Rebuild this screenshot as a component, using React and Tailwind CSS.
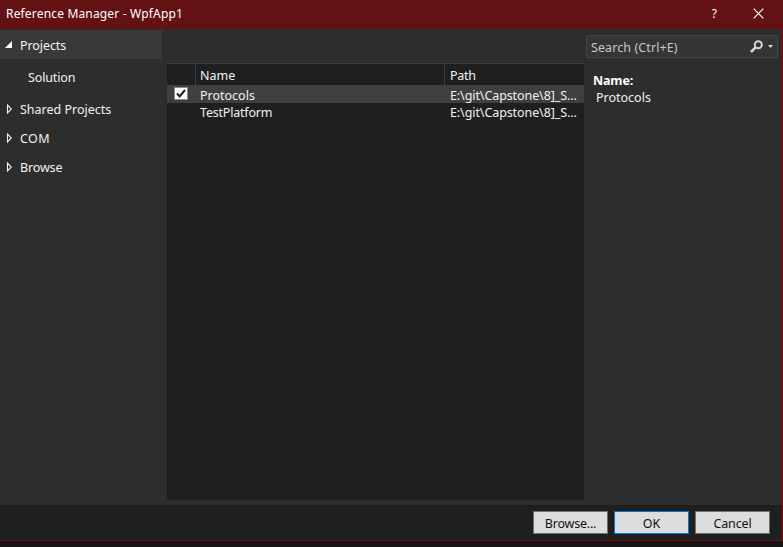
function Arrow() {
  return (
    <svg className="ml-[6px] mr-[8px] shrink-0" width="6" height="10" viewBox="0 0 6 10" fill="none">
      <path d="M1.5 1V9L5.3 5Z" stroke="#f1f1f1" strokeWidth="1.1" />
    </svg>
  );
}

function TreeItem({ label, className }) {
  return (
    <div className="flex h-[29px] items-center">
      <Arrow />
      <span className={className}>{label}</span>
    </div>
  );
}

function Row({ name, nameClass, selected }) {
  return (
    <div className={selected ? "flex h-[18px] items-center bg-[#3f3f40]" : "flex h-[17px] items-center"}>
      <div className="flex w-[33px] shrink-0 pl-[7px]">
        {selected && (
          <svg className="-mt-px" width="14" height="13" viewBox="0 0 14 13">
            <rect x="0.5" y="0.5" width="13" height="12" fill="#fff" stroke="#8a8a8a" />
            <path d="M3 6.5L5.7 9.5L11 3" stroke="#1e1e1e" strokeWidth="2" fill="none" />
          </svg>
        )}
      </div>
      <div className={nameClass}>{name}</div>
      <div className="whitespace-nowrap pt-[2px] tracking-[-0.09px]">E:\git\Capstone\8]_S...</div>
    </div>
  );
}

export default function App() {
  return (
    <div className="flex h-[547px] w-[783px] flex-col overflow-hidden bg-[#161617] font-['Noto_Sans',sans-serif] text-[12.5px] leading-[17px] text-[#f1f1f1]">
      <div className="flex h-[29px] shrink-0 items-center bg-[#631113] pl-[6px] text-[12px] text-white">
        <span className="-mt-[2px] flex-1 tracking-[0.17px]">Reference Manager - WpfApp1</span>
        <span className="-mt-[2px] mr-[36px]">?</span>
        <svg className="-mt-[2px] mr-[19px]" width="11" height="11" viewBox="0 0 11 11">
          <path d="M.7 .7L10.3 10.3M10.3 .7L.7 10.3" stroke="#fff" strokeWidth="1.2" />
        </svg>
      </div>
      <div className="flex h-[512px] shrink-0 flex-col border-b border-r border-[#780c10] bg-[#2d2d2e]">
        <div className="flex h-[476px] shrink-0">
          <nav className="w-[167px] shrink-0 pt-px">
            <div className="flex h-[29px] w-[162px] items-center bg-[#393939]">
              <svg className="ml-[5px] mr-[8px]" width="7" height="7" viewBox="0 0 7 7">
                <path d="M7 0V7H0Z" fill="#fff" />
              </svg>
              <span className="pt-[2px] tracking-[-0.08px]">Projects</span>
            </div>
            <div className="flex h-[35px] items-center pl-[28px] pt-[2px] tracking-[-0.15px]">Solution</div>
            <TreeItem label="Shared Projects" className="pt-[2px]" />
            <TreeItem label="COM" className="pt-[2px] tracking-[0.4px]" />
            <TreeItem label="Browse" className="pt-[2px] tracking-[-0.15px]" />
          </nav>
          <main className="mt-[34px] h-[437px] w-[417px] shrink-0 bg-[#1f1f20]">
            <div className="flex h-[22px] border-t border-[#3f3f40]">
              <div className="w-[29px] border-r border-[#3f3f40]" />
              <div className="w-[249px] border-r border-[#3f3f40] pl-[4px] pt-[3px]">Name</div>
              <div className="pl-[5px] pt-[3px] tracking-[-0.3px]">Path</div>
            </div>
            <Row name="Protocols" nameClass="w-[250px] shrink-0 pt-[2px]" selected />
            <Row name="TestPlatform" nameClass="w-[250px] shrink-0 pt-[2px] tracking-[-0.2px]" />
          </main>
          <aside className="pl-[2px] pt-[6px]">
            <div className="flex h-[23px] w-[192px] items-center border border-[#434346] bg-[#353536] pl-[4px] text-[#c8c8c8]">
              <span className="flex-1 pt-[2px] tracking-[0.1px]">Search (Ctrl+E)</span>
              <svg className="mr-[5px]" width="13" height="13" viewBox="0 0 13 13" fill="none">
                <circle cx="8.3" cy="4.7" r="3.5" stroke="#d6d6d6" strokeWidth="2" />
                <path d="M5.6 7.4L1 12" stroke="#d6d6d6" strokeWidth="2.6" />
              </svg>
              <svg className="mr-[4px]" width="5" height="3" viewBox="0 0 5 3">
                <path d="M0 0H5L2.5 3Z" fill="#d6d6d6" />
              </svg>
            </div>
            <div className="mt-[14px] pl-[7px] font-bold tracking-[-0.15px] text-white">Name:</div>
            <div className="pl-[10px]">Protocols</div>
          </aside>
        </div>
        <footer className="flex h-[35px] items-start justify-end gap-[6px] bg-[#1f1f20] pr-[12px] pt-[6px] text-[#111]">
          <button className="h-[23px] w-[75px] border border-[#707070] bg-[#dddddd] pt-[2px] tracking-[-0.2px]">Browse...</button>
          <button className="h-[23px] w-[75px] border border-[#0078d7] bg-[#dddddd] pt-[2px]">OK</button>
          <button className="h-[23px] w-[75px] border border-[#707070] bg-[#dddddd] pt-[2px] tracking-[-0.15px]">Cancel</button>
        </footer>
      </div>
    </div>
  );
}
